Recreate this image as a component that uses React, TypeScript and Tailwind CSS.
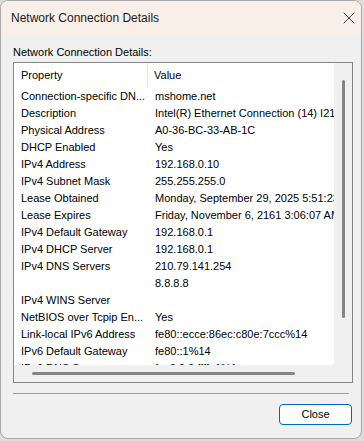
import { X } from "lucide-react";

const rows: [string, string][] = [
  ["Connection-specific DN...", "mshome.net"],
  ["Description", "Intel(R) Ethernet Connection (14) I219-V"],
  ["Physical Address", "A0-36-BC-33-AB-1C"],
  ["DHCP Enabled", "Yes"],
  ["IPv4 Address", "192.168.0.10"],
  ["IPv4 Subnet Mask", "255.255.255.0"],
  ["Lease Obtained", "Monday, September 29, 2025 5:51:23 PM"],
  ["Lease Expires", "Friday, November 6, 2161 3:06:07 AM"],
  ["IPv4 Default Gateway", "192.168.0.1"],
  ["IPv4 DHCP Server", "192.168.0.1"],
  ["IPv4 DNS Servers", "210.79.141.254"],
  ["", "8.8.8.8"],
  ["IPv4 WINS Server", ""],
  ["NetBIOS over Tcpip En...", "Yes"],
  ["Link-local IPv6 Address", "fe80::ecce:86ec:c80e:7ccc%14"],
  ["IPv6 Default Gateway", "fe80::1%14"],
  ["IPv6 DNS Servers", "fec0:0:0:ffff::1%1"],
];

export default function App() {
  return (
    <div className="w-[364px] h-[441px] bg-[#dcdcdc] font-['Liberation_Sans',sans-serif] text-[11px] text-black">
      {/* окно */}
      <div className="w-[362px] h-[439px] rounded-[8px] border border-[#a8a8a8] bg-[#f0f0f0] overflow-hidden flex flex-col">
        {/* заголовок */}
        <div className="h-[33px] shrink-0 bg-[#f8efe9] flex items-center pl-[10px] pr-[2px]">
          <span className="flex-1 text-[12px] text-[#1a1a1a]">Network Connection Details</span>
          <X className="w-[20px] h-[20px] text-[#222]" strokeWidth={1} />
        </div>

        {/* тело */}
        <div className="flex-1 flex flex-col pl-[12px] pr-[9px]">
          <div className="mt-[10px] h-[17px] leading-[17px] text-[11px]">Network Connection Details:</div>

          {/* список */}
          <div className="mt-[1px] w-[340px] h-[321px] border border-[#858585] flex">
            <div className="w-[320px] flex flex-col">
              <div className="flex-1 bg-white overflow-hidden">
                <div className="h-[25px] flex items-center">
                  <div className="w-[134px] pl-[7px] h-full flex items-center border-r border-[#e5e5e5]">Property</div>
                  <div className="pl-[6px]">Value</div>
                </div>
                {rows.map(([k, v], i) => (
                  <div key={i} className="h-[17px] flex items-center whitespace-nowrap">
                    <div className="w-[134px] shrink-0 pl-[7px] overflow-hidden">{k}</div>
                    <div className="pl-[7px]">{v}</div>
                  </div>
                ))}
              </div>
              <div className="h-[17px] shrink-0 flex items-center pl-[18px]">
                <div className="w-[263px] h-[3px] rounded-full bg-[#858585]" />
              </div>
            </div>
            <div className="w-[18px] pt-[17px] flex justify-center">
              <div className="w-[3px] h-[238px] rounded-full bg-[#858585]" />
            </div>
          </div>

          <div className="mt-[10px] w-[336px] h-px bg-[#a0a0a0]" />

          <div className="mt-[10px] flex justify-end">
            <button className="w-[73px] h-[21px] rounded-[4px] border border-[#0067c0] bg-[#fdfdfd] text-[11px] flex items-center justify-center">
              Close
            </button>
          </div>
        </div>
      </div>
    </div>
  );
}
